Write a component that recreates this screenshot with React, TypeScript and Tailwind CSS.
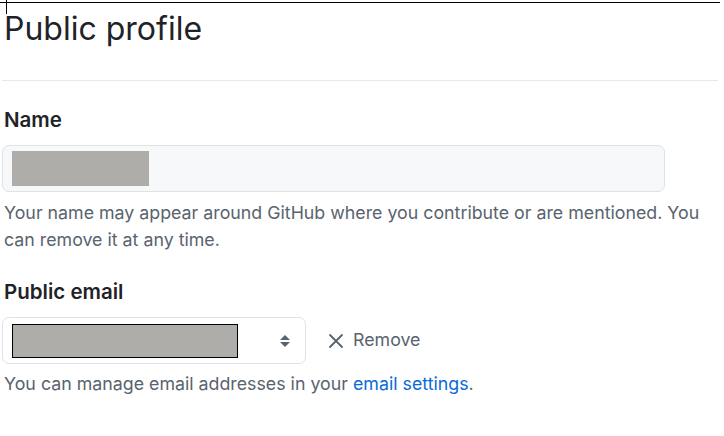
import React from "react";

export default function App() {
  return (
    <div
      className="relative w-[724px] h-[436px] bg-white overflow-hidden text-[#1f2328]"
      style={{ fontFamily: "Inter, 'Liberation Sans', sans-serif" }}
    >
      {/* overlay lines */}
      <div className="absolute left-0 top-[2px] w-[720px] h-px bg-black" />
      <div className="absolute left-[6px] top-0 w-px h-[14px] bg-black" />

      <div className="pt-[9px] pl-[2px] pr-[6px]">
        <h1 className="text-[32px] leading-[40px] font-normal pl-[2px]">Public profile</h1>
        <div className="mt-[31px] h-px bg-[#e5e8ec]" />

        <div className="mt-[27px] pl-[2px] text-[20.5px] leading-[24px] font-semibold">Name</div>
        <div className="mt-[13px] w-[663px] h-[47px] rounded-[7px] border border-[#dde2e7] bg-[#f7f8fa] flex items-center pl-[9px]">
          <div className="w-[137px] h-[35px] bg-[#aeadaa]" />
        </div>
        <p className="mt-[7px] pl-[2px] text-[17.8px] leading-[27px] text-[#59636e]">
          Your name may appear around GitHub where you contribute or are mentioned. You can remove it at any time.
        </p>

        <div className="mt-[27px] pl-[2px] text-[20.5px] leading-[24px] font-semibold">Public email</div>
        <div className="mt-[13px] flex items-center">
          <div className="w-[304px] h-[47px] rounded-[7px] border border-[#dde2e7] bg-white flex items-center pl-[9px] pr-[14px]">
            <div className="w-[226px] h-[34px] bg-[#aeadaa] border border-black" />
            <div className="ml-auto">
              <svg width="12" height="16" viewBox="0 0 12 16">
                <path d="M1 7 L6 2 L11 7 Z" fill="#59636e" />
                <path d="M1 9 L6 14 L11 9 Z" fill="#59636e" />
              </svg>
            </div>
          </div>
          <div className="ml-[22px] flex items-center text-[17.8px] text-[#59636e]">
            <svg width="16" height="16" viewBox="0 0 16 16" className="mr-[9px]">
              <path d="M2 2 L14 14 M14 2 L2 14" stroke="#59636e" strokeWidth="1.8" strokeLinecap="round" />
            </svg>
            <span>Remove</span>
          </div>
        </div>
        <p className="mt-[6px] pl-[2px] text-[17.8px] leading-[27px] text-[#59636e]">
          You can manage email addresses in your <a className="text-[#0969da]">email settings</a>.
        </p>
      </div>
    </div>
  );
}
